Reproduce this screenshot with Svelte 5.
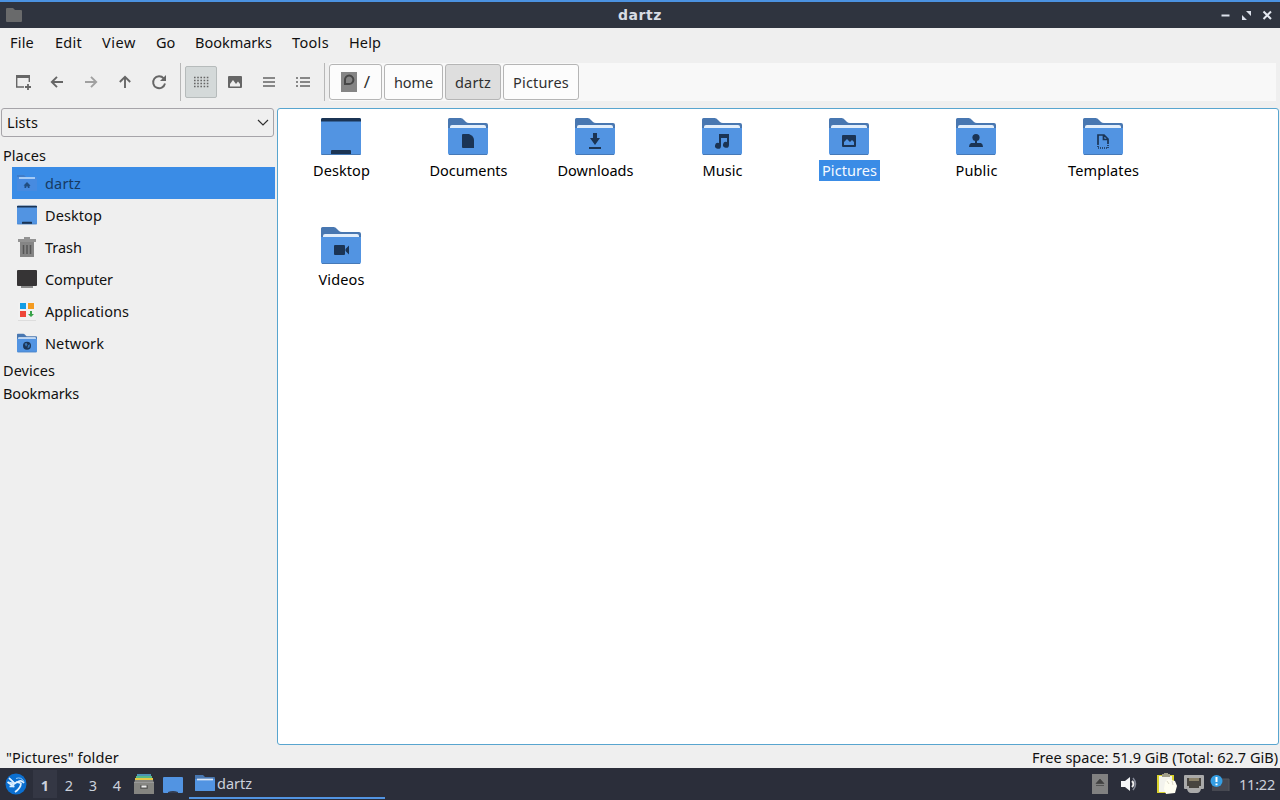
<script>
  const menus = [['File', 24, 45], ['Edit', 27, 47], ['View', 34, 54], ['Go', 19, 39], ['Bookmarks', 77, 97], ['Tools', 37, 57], ['Help', 32, 60]];
  const tools = ['newtab', 'back', 'forward', 'up', 'reload'];
  const views = ['icons', 'thumbs', 'compact', 'detail'];
  const crumbs = [['home', 39, 59], ['dartz', 36, 56], ['Pictures', 56, 76]];
  const places = [['dartz', 36], ['Desktop', 57], ['Trash', 37], ['Computer', 68], ['Applications', 84], ['Network', 59]];
  const files = [['Desktop', 57], ['Documents', 78], ['Downloads', 76], ['Music', 40], ['Pictures', 55], ['Public', 42], ['Templates', 71], ['Videos', 46]];

  // Spreads letters so that a label takes the given width in pixels.
  function fit(node, width) {
    const range = document.createRange();
    range.selectNodeContents(node);
    const natural = range.getBoundingClientRect().width;
    const n = node.textContent.length;
    const gap = (width - natural) / n;
    node.style.letterSpacing = `${gap}px`;
  }
</script>

{#snippet folder(kind)}
  <svg class="folder" viewBox="0 0 40 37">
    {#if kind === 'Desktop'}
      <rect y="0" width="40" height="37" rx="1.5" fill="#5294e2" />
      <path d="M0 3.500V1.500Q0 0 1.500 0h37Q40 0 40 1.500V3.500z M10 36.500V33q0-1 1-1h18q1 0 1 1v3.500z" fill="#1b3454" />
      <path d="M.5 36.500h39" stroke="#4578b4" />
    {:else}
      <path d="M0 35V1.500Q0 0 1.500 0h11q2 0 3.500 2l2 2q1 1 3 1h17q2 0 2 2v28z" fill="#4877b1" />
      <path d="M2 12V9q0-2 2-2h32q2 0 2 2v3z" fill="#e2eefb" />
      <path d="M0 10h40v25q0 2-2 2H2q-2 0-2-2z" fill="#5294e2" />
      <path d="M1 36.500h38" stroke="#4679b7" />
      <g fill="#1b3454">
        {#if kind === 'Documents'}
          <path d="M15 16h6q5 2 5 6v8H15q-1 0-1-1V17q0-1 1-1z" />
        {:else if kind === 'Downloads'}
          <path d="M18 15h4v5h3l-5 7-5-7h3zM14 29h12v2H14z" />
        {:else if kind === 'Music'}
          <path d="M17 16h10v11a3 3 0 1 1-2-3v-4h-6v8a3 3 0 1 1-2-3z" />
        {:else if kind === 'Pictures'}
          <path fill-rule="evenodd" d="M14 17h12q1 0 1 1v10q0 1-1 1H14q-1 0-1-1V18q0-1 1-1zm1 10h10v-3l-2-2-2 2-3-3-3 3z" />
        {:else if kind === 'Public'}
          <circle cx="20" cy="19.500" r="3.600" /><path d="M19 22h2v3h4q2 1 2 4H13q0-3 2-4h4z" />
        {:else if kind === 'Templates'}
          <path d="M15 26v-9h6l4 4v5M20.500 17v4.500H25" fill="none" stroke="#1b3454" stroke-width="1.700" />
          <path d="M15 26v4h10v-4" fill="none" stroke="#1b3454" stroke-width="1.600" stroke-dasharray="1 1" />
        {:else if kind === 'Videos'}
          <path d="M14 18h9q1 0 1 1v8q0 1-1 1h-9q-1 0-1-1v-8q0-1 1-1zM28 18.500v9L24.500 24v-2z" />
        {:else if kind === 'Network'}
          <circle cx="20" cy="24" r="8" /><path d="M15 20l4-2 2 4-3 4zM22 23l4-2-1 6-4 2z" fill="#3975b5" />
        {/if}
      </g>
    {/if}
  </svg>
{/snippet}

{#snippet tool(kind)}
  <svg class="tool" viewBox="0 0 16 16" fill="none" stroke="#666" stroke-width="2">
    {#if kind === 'newtab'}
      <path d="M1 2.500h14" stroke-width="3" /><path d="M1.700 2v11H9M14.300 3v5" stroke-width="1.400" /><path d="M10 13h6M13 10v6" stroke-width="1.800" />
    {:else if kind === 'back'}<path d="M14 8H3M8 2.800L2.800 8 8 13.200" stroke-width="1.900" />
    {:else if kind === 'forward'}<path d="M2 8h11M8 2.800L13.200 8 8 13.200" stroke="#a0a0a0" stroke-width="1.900" />
    {:else if kind === 'up'}<path d="M8 14V3M2.800 8L8 2.800 13.200 8" stroke-width="1.900" />
    {:else if kind === 'reload'}<path d="M12.700 4.300A6 6 0 1 0 14 9.500" stroke-width="1.900" /><path d="M15 1v6H9z" fill="#666" stroke="none" />
    {:else if kind === 'icons'}<path d="M1 3.500h14.500M1 6.500h14.500M1 9.500h14.500M1 12.500h14.500" stroke-width="1.400" stroke-dasharray="1.600 1.600" />
    {:else if kind === 'thumbs'}<path fill="#666" stroke="none" fill-rule="evenodd" d="M2 2h12q1 0 1 1v10q0 1-1 1H2q-1 0-1-1V3q0-1 1-1zm1 10.500h10V10l-2-2.500L9 10 6 6l-3 4z" />
    {:else if kind === 'compact'}<path d="M2 4h12M2 8h12M2 12h12" stroke-width="1.700" />
    {:else}<path d="M1 4h2M1 8h2M1 12h2M5 4h10M5 8h10M5 12h10" stroke-width="1.600" />{/if}
  </svg>
{/snippet}

<div class="window">
  <header class="title">
    <svg class="mini" viewBox="0 0 16 14"><path d="M0 13V1q0-1 1-1h6l2 2h6q1 0 1 1v10q0 1-1 1H1q-1 0-1-1z" fill="#696a6b" /></svg>
    <strong><span use:fit={44}>dartz</span></strong>
    <svg class="controls" viewBox="0 0 54 12"><path d="M1.500 6.500h8" stroke="#dce1eb" stroke-width="2" /><path d="M26 2h5v5zM22 6v5h5z" fill="#dce1eb" /><path d="M43.500 2.500l7.500 7.500m0-7.500l-7.500 7.500" stroke="#e4e8f0" stroke-width="2" /></svg>
  </header>
  <nav class="menu">
    {#each menus as [name, w, step]}<div style:width="{step}px"><span use:fit={w}>{name}</span></div>{/each}
  </nav>
  <div class="toolbar">
    <div class="group">{#each tools as t}<button aria-label={t}>{@render tool(t)}</button>{/each}</div>
    <i class="sep"></i>
    <div class="group second">{#each views as t}<button aria-label={t} class:active={t === 'icons'}>{@render tool(t)}</button>{/each}</div>
    <i class="sep"></i>
    <div class="path">
      <div class="crumb root">
        <svg class="disk" viewBox="0 0 16 20"><rect width="16" height="20" fill="#858585" /><path d="M4 12V8a4.200 4.200 0 1 1 4 4z" fill="none" stroke="#474747" stroke-width="2" /></svg>
        <span class="slash">/</span>
      </div>
      {#each crumbs as [name, w, bw]}<div class="crumb" class:current={name === 'dartz'} style:width="{bw}px"><span use:fit={w}>{name}</span></div>{/each}
    </div>
  </div>
  <main>
    <aside>
      <div class="combo"><span use:fit={31}>Lists</span><svg viewBox="0 0 12 8"><path d="M1 1l5 5 5-5" fill="none" stroke="#303030" stroke-width="1.200" /></svg></div>
      <div class="heading first"><span use:fit={43}>Places</span></div>
      {#each places as [name, w], i}
        <div class="place" class:selected={i === 0}>
          <div class="placeicon">
            {#if i === 0}
              <svg viewBox="0 0 20 20"><path d="M0 18V2h7l2 2h11v14z" fill="#478be0" /><path d="M0 2h7l2 2H0z" fill="#3e7dca" /><path d="M2 4h16v2H2z" fill="#a5cbf5" /><path d="M6.500 12.500L10 9l3.500 3.500-1 .5v2h-1.700v-1.500H9.200V15H7.500v-2.500z" fill="#214d80" /></svg>
            {:else if name === 'Desktop' || name === 'Network'}{@render folder(name)}
            {:else if name === 'Trash'}
              <svg viewBox="0 0 20 20"><path d="M1 2h6V0h6v2h6v3H1z" fill="#939393" /><path d="M3 5h14v15H3z" fill="#858585" /><path d="M6.500 8v9M10 8v9M13.500 8v9" stroke="#555" stroke-width="1.500" /></svg>
            {:else if name === 'Computer'}
              <svg viewBox="0 0 20 20"><rect y="1" width="20" height="16" rx="1" fill="#363435" /><path d="M4 17h12v2H4z" fill="#8b8b8b" /></svg>
            {:else}
              <svg viewBox="0 0 20 20"><rect x="1" y="1" width="18" height="18" rx="1" fill="#f1f1f1" /><path d="M1 19.500h18" stroke="#ddd" /><path d="M3 2h6v6H3z" fill="#139de5" /><path d="M11 2h6v6h-6z" fill="#f49b20" /><path d="M3 10h6v6H3z" fill="#ee4639" /><path d="M13 10h2v3h2l-3 3-3-3h2z" fill="#38a349" /></svg>
            {/if}
          </div><span use:fit={w}>{name}</span>
        </div>
      {/each}
      <div class="heading"><span use:fit={52}>Devices</span></div>
      <div class="heading"><span use:fit={76}>Bookmarks</span></div>
    </aside>
    <section>
      {#each files as [name, w]}<div class="file" class:chosen={name === 'Pictures'}>{@render folder(name)}<div class="label"><span use:fit={w}>{name}</span></div></div>{/each}
    </section>
  </main>
  <footer><span use:fit={113}>"Pictures" folder</span><span use:fit={246}>Free space: 51.9 GiB (Total: 62.7 GiB)</span></footer>
  <div class="panel">
    <svg class="logo" viewBox="0 0 22 22"><circle cx="11" cy="11" r="10.500" fill="#0b6fd0" /><path d="M4 5l5 5M2.500 9l5 3.500M4.500 13.500h5M9 11l3-2 4.500 1.500M12 9.500q4-3.500 7 .5M16 10q0 5-6 9" fill="none" stroke="#e3f2ff" stroke-width="1.700" /><path d="M4 4l6 5.500-1.500 5L5 12l3 0-5-3.500 5 1z" fill="#d6ecff" /><path d="M11 5.500q5-2 8 3" fill="none" stroke="#9ccdf7" /></svg>
    <div class="desks"><b>1</b><span>2</span><span>3</span><span>4</span></div>
    <svg class="cabinet" viewBox="0 0 20 21"><path d="M3 0h14v3H3z" fill="#4c94b5" /><path d="M2 2h16v3H2z" fill="#57ba88" /><path d="M1 4h18v3H1z" fill="#e4c747" /><path d="M1 6h18l1 3v11H0V9z" fill="#858581" /><path d="M0 8.500h20" stroke="#999" /><rect x="6" y="11" width="8" height="4" rx="1" fill="#5e5e5c" /><path d="M7.500 12.500h5" stroke="#eee" stroke-width="2" /></svg>
    <svg class="screen" viewBox="0 0 20 17"><rect width="20" height="16" rx="1" fill="#5294e2" /><path d="M5 16v-1q5-2 10 0v1z" fill="#333c50" /></svg>
    <div class="task"><svg class="taskfolder" viewBox="0 0 20 18"><path d="M0 17V1h8l2 2h9q1 0 1 1v13z" fill="#4877b1" /><path d="M0 5h20v11q0 1-1 1H1q-1 0-1-1z" fill="#5294e2" /><path d="M2 5.500h16" stroke="#dce9fa" stroke-width="1.700" /></svg><span use:fit={35}>dartz</span></div>
    <div class="tray">
      <svg class="eject" viewBox="0 0 16 20"><rect width="16" height="20" fill="#818181" /><path d="M4 9.500l4-4.500 4 4.500zM4 11.500h8" fill="#404040" stroke="#404040" stroke-width=".7" /></svg>
      <svg class="sound" viewBox="0 0 16 16"><path d="M0 5h4l5-4v14l-5-4H0z" fill="#f4f5f7" /><path d="M11 5q3 3 0 6" fill="none" stroke="#eee" stroke-width="2" /><path d="M12 2q5 6 0 12" fill="none" stroke="#858997" stroke-width="1.500" /></svg>
      <svg class="clip" viewBox="0 0 20 22"><path d="M0 2h17v18H0z" fill="#d9d22d" /><path d="M2 3h13v16H2z" fill="#f3f3ed" /><path d="M5 1h2V0h4v1h2v3H5z" fill="#a09d89" /><path d="M8 9l3-3 7 2 2 5-2 7-9 1-2-5z" fill="#fffef2" /><path d="M10 8l2 3m3-3l1 4" stroke="#ddd9c8" /></svg>
      <svg class="net" viewBox="0 0 20 18"><path d="M1 0h18q1 0 1 1v12q0 1-1 1h-2q-1 4-4 4H7q-3 0-4-4H1q-1 0-1-1V1q0-1 1-1z" fill="#aaa" /><path d="M3 3h14v8h-2v2H5v-2H3z" fill="#484540" /><path d="M6 3v3M8 3v3M10 3v3M12 3v3M14 3v3" stroke="#cbbd91" /></svg>
      <svg class="notice" viewBox="0 0 20 18"><path d="M8 4h11v12H2v-4z" fill="#464851" /><path d="M12 4h7v12" fill="none" stroke="#54565c" /><circle cx="6.500" cy="6" r="6" fill="#359ee3" /><path d="M6.500 2v5M6.500 8.500v1.700" stroke="#fff" stroke-width="2" /></svg>
      <span class="clock" use:fit={36}>11:22</span>
    </div>
  </div>
</div>

<style>
  :global(body) { margin: 0; overflow: hidden; }
  * { box-sizing: border-box; }
  .window { width: 1280px; height: 800px; display: flex; flex-direction: column; background: #efefef; font: 14.500px/20px "Noto Sans", sans-serif; color: #111; white-space: nowrap; }
  svg { display: block; flex: none; }
  .title { height: 28px; border-top: 2px solid #4b92e1; background: #2f343f; color: #d8dce4; display: grid; grid-template-columns: 60px 1fr 60px; align-items: center; padding: 0 6px; }
  .mini { width: 16px; height: 14px; }
  .title strong { text-align: center; font: bold 14px/20px "DejaVu Sans", sans-serif; }
  .controls { width: 54px; height: 12px; justify-self: end; }
  .menu { height: 30px; display: flex; align-items: center; padding: 0 0 2px 10px; }
  .toolbar { height: 50px; display: flex; padding-top: 5px; align-items: flex-start; }
  .group { display: flex; gap: 2px; padding: 3px 5px 0 7px; }
  .second { padding: 3px 5px 0 4px; }
  button { width: 32px; height: 32px; padding: 7px; border: 1px solid transparent; background: transparent; border-radius: 2px; }
  .active { background: #d4d9d9; border-color: #b6bbbb; }
  .tool { width: 16px; height: 16px; }
  .sep { width: 1px; height: 38px; background: #b7b7b7; flex: none; }
  .path { height: 38px; width: 947px; margin-left: 4px; display: flex; gap: 2px; background: #f8f8f8; }
  .crumb { flex: none; height: 36px; margin-top: 1px; display: flex; align-items: center; justify-content: center; background: #fcfcfc; border: 1px solid #b5b5b5; border-radius: 3px; color: #303030; }
  .root { width: 53px; gap: 7px; }
  .slash { font-size: 17px; }
  .disk { width: 16px; height: 20px; margin-top: -1px; }
  .current { background: #dedede; }
  main { height: 637px; display: flex; }
  aside { width: 277px; }
  .combo { width: 273px; height: 29px; margin-left: 1px; border: 1px solid #a6a4a9; border-radius: 3px; display: flex; align-items: center; justify-content: space-between; padding: 0 4px 2px 5px; }
  .combo svg { width: 12px; height: 8px; margin-top: 2px; }
  .heading { height: 23px; padding: 0 0 2px 3px; display: flex; align-items: center; }
  .first { height: 30px; padding-top: 7px; }
  .place { height: 32px; width: 263px; margin-left: 12px; padding-left: 5px; display: flex; align-items: center; gap: 8px; }
  .selected { background: #3a8ce6; color: #173a63; }
  .placeicon { width: 20px; height: 20px; display: flex; align-items: center; }
  .placeicon svg { width: 20px; max-height: 20px; }
  section { width: 1002px; border: 1px solid #58a5cf; border-radius: 3px; background: #fff; display: grid; grid-template-columns: repeat(7, 127px); grid-auto-rows: 109px; align-content: start; padding-top: 9px; }
  .file { display: flex; flex-direction: column; align-items: center; gap: 5px; }
  .folder { width: 40px; height: 37px; }
  .file .folder { margin-right: 1px; }
  .label { height: 21px; padding: 0 3px; color: #000; }
  .chosen .label { background: #3a8ce6; color: #f5faff; }
  footer { height: 23px; padding: 2px 2px 0 6px; display: flex; justify-content: space-between; }
  .panel { height: 32px; background: #2b2e3a; color: #ccd1dc; display: flex; align-items: center; padding-left: 5px; }
  .logo { width: 22px; height: 22px; }
  .desks { display: flex; margin-left: 6px; }
  .desks > * { width: 24px; height: 28px; line-height: 28px; padding-top: 1px; text-align: center; }
  .desks b { background: #343744; }
  .cabinet { width: 20px; height: 21px; margin-left: 5px; }
  .screen { width: 20px; height: 17px; margin: 2px 6px 0 9px; }
  .task { width: 196px; height: 30px; border-bottom: 2px solid #5294e2; display: flex; align-items: center; padding-left: 6px; gap: 2px; }
  .taskfolder { width: 20px; height: 18px; }
  .tray { margin-left: auto; display: flex; align-items: center; padding-right: 5px; }
  .eject { width: 16px; height: 20px; margin-right: 13px; }
  .sound { width: 16px; height: 16px; margin-right: 20px; }
  .clip { width: 20px; height: 22px; margin-right: 7px; }
  .net { width: 20px; height: 18px; margin-right: 6px; }
  .notice { width: 20px; height: 18px; margin-right: 9px; }
  .clock { margin-top: -1px; }
</style>
